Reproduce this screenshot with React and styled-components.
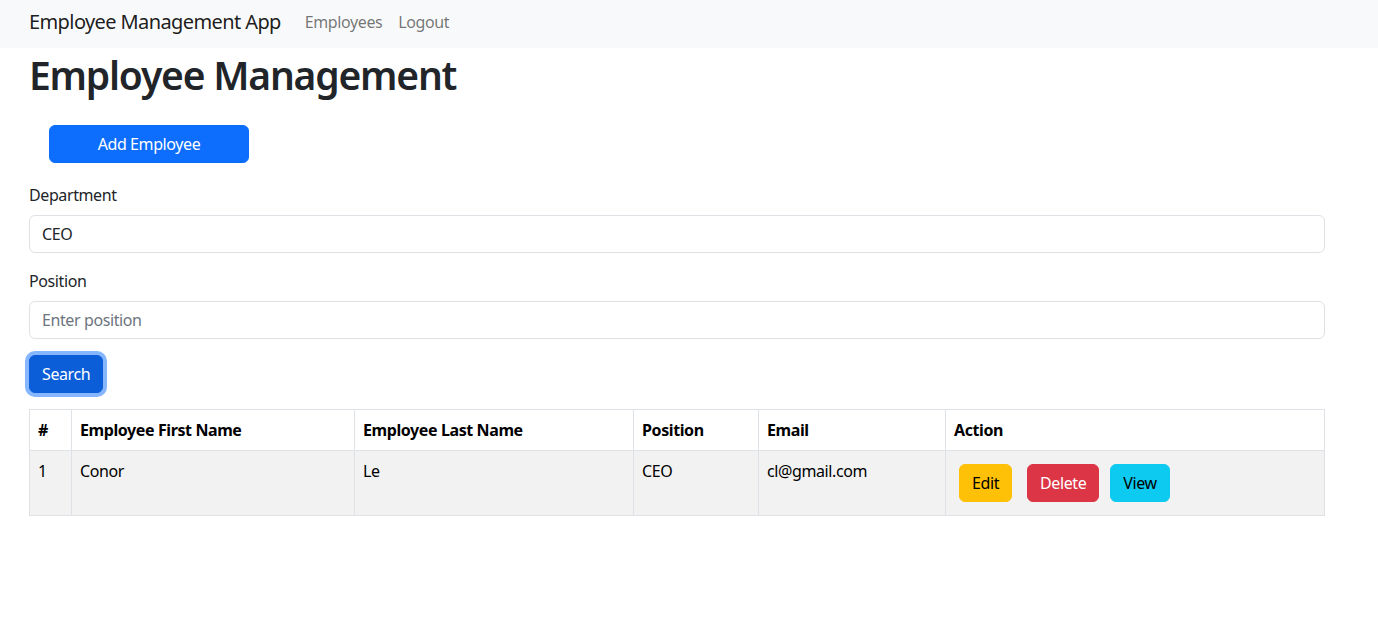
import styled, { createGlobalStyle } from "styled-components";

const GlobalStyle = createGlobalStyle`
    body {
        margin: 0;
        font-family: "Segoe UI", "Noto Sans", "Liberation Sans", sans-serif;
        font-size: 16px;
        line-height: 1.5;
        letter-spacing: -0.4px;
        color: #212529;
        background: #fff;
    }
    * { box-sizing: border-box; }
`;

const Navbar = styled.nav`
    height: 48px;
    background: #f8f9fa;
    display: flex;
    align-items: center;
    padding: 0 29px 4px;
`;
const Brand = styled.a`
    font-size: 20px;
    letter-spacing: -0.6px;
    color: rgba(0, 0, 0, 0.9);
    margin-right: 16px;
    text-decoration: none;
`;
const NavLink = styled.a`
    color: rgba(0, 0, 0, 0.55);
    text-decoration: none;
    padding: 0 8px;
`;

const Main = styled.main`
    margin-left: 29px;
    width: 1296px;
`;
const Heading = styled.h1`
    font-size: 39px;
    font-weight: 600;
    letter-spacing: -1.2px;
    line-height: 1.2;
    margin: 0 0 26px;
    padding-top: 4px;
`;
const Button = styled.button`
    font-family: inherit;
    font-size: 16px;
    letter-spacing: -0.4px;
    line-height: 1.5;
    border: 1px solid ${(p) => p.$bg};
    background: ${(p) => p.$bg};
    color: ${(p) => p.$color || "#fff"};
    border-radius: 6px;
    padding: 6px 12px;
    height: 38px;
`;
const AddButton = styled(Button)`
    width: 200px;
    margin-left: 20px;
`;
const SearchButton = styled(Button)`
    box-shadow: 0 0 0 4px rgba(13, 110, 253, 0.5);
`;
const Field = styled.div`
    margin-top: ${(p) => p.$top || 16}px;
`;
const Label = styled.label`
    display: block;
    margin-bottom: 8px;
`;
const Input = styled.input`
    display: block;
    width: 100%;
    height: 38px;
    padding: 6px 12px;
    font-family: inherit;
    font-size: 16px;
    letter-spacing: -0.4px;
    color: #212529;
    border: 1px solid #dee2e6;
    border-radius: 6px;
    &::placeholder { color: #6c757d; }
`;
const Actions = styled.div`
    margin-top: 16px;
    margin-bottom: 16px;
`;
const Table = styled.table`
    width: 100%;
    border-collapse: collapse;
    color: #000;
`;
const Th = styled.th`
    text-align: left;
    padding: 8px;
    border: 1px solid #dee2e6;
    font-weight: 700;
    width: ${(p) => p.$w}px;
`;
const Td = styled.td`
    padding: 8px;
    border: 1px solid #dee2e6;
    background: #f2f2f2;
    vertical-align: top;
`;
const ButtonRow = styled.div`
    display: flex;
    padding: 5px;
    gap: 15px;
    & > :last-child { margin-left: -4px; }
`;

function App() {
    return (
        <>
            <GlobalStyle />
            <Navbar>
                <Brand>Employee Management App</Brand>
                <NavLink>Employees</NavLink>
                <NavLink>Logout</NavLink>
            </Navbar>
            <Main>
                <Heading>Employee Management</Heading>
                <AddButton $bg="#0d6efd">Add Employee</AddButton>
                <Field $top={20}>
                    <Label>Department</Label>
                    <Input defaultValue="CEO" />
                </Field>
                <Field>
                    <Label>Position</Label>
                    <Input placeholder="Enter position" />
                </Field>
                <Actions>
                    <SearchButton $bg="#0b5ed7">Search</SearchButton>
                </Actions>
                <Table>
                    <thead>
                        <tr>
                            <Th $w={42}>#</Th>
                            <Th $w={283}>Employee First Name</Th>
                            <Th $w={279}>Employee Last Name</Th>
                            <Th $w={125}>Position</Th>
                            <Th $w={187}>Email</Th>
                            <Th>Action</Th>
                        </tr>
                    </thead>
                    <tbody>
                        <tr>
                            <Td>1</Td>
                            <Td>Conor</Td>
                            <Td>Le</Td>
                            <Td>CEO</Td>
                            <Td>cl@gmail.com</Td>
                            <Td>
                                <ButtonRow>
                                    <Button $bg="#ffc107" $color="#000">Edit</Button>
                                    <Button $bg="#dc3545">Delete</Button>
                                    <Button $bg="#0dcaf0" $color="#000">View</Button>
                                </ButtonRow>
                            </Td>
                        </tr>
                    </tbody>
                </Table>
            </Main>
        </>
    );
}

export default App;
